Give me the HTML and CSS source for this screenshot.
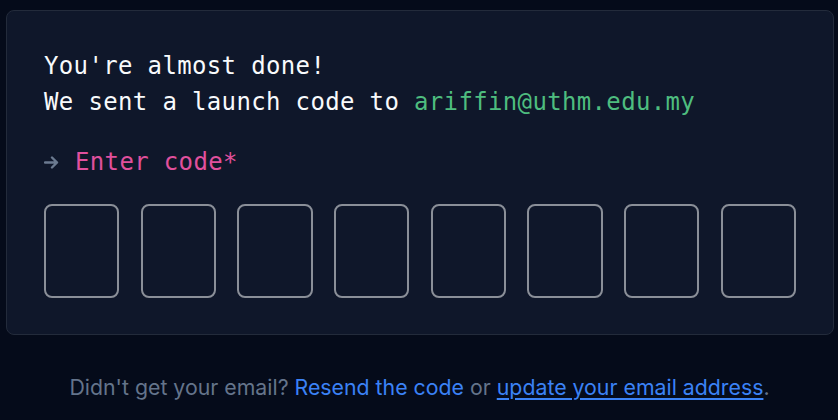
FILE: index.html
```html
<!DOCTYPE html>
<html lang="en">
<head>
<meta charset="utf-8">
<title>Verify</title>
<link rel="stylesheet" href="styles.css">
</head>
<body>
<main class="page">
  <section class="card">
    <p class="msg">You're almost done!<br>We sent a launch code to <span class="email">ariffin@uthm.edu.my</span></p>
    <label class="label"><svg class="arrow" width="15" height="13" viewBox="0 0 15 13" aria-hidden="true"><path d="M1 6.5H13M8 1.5L13 6.5L8 11.5" fill="none" stroke="#6b7a90" stroke-width="2.4" stroke-linecap="round" stroke-linejoin="round"/></svg><span class="prompt">Enter code*</span></label>
    <div class="codes">
      <div class="box"></div><div class="box"></div><div class="box"></div><div class="box"></div>
      <div class="box"></div><div class="box"></div><div class="box"></div><div class="box"></div>
    </div>
  </section>
  <p class="foot">Didn't get your email? <a class="link" href="#">Resend the code</a> or <a class="link underline" href="#">update your email address</a>.</p>
</main>
</body>
</html>
```
FILE: styles.css
```css
html, body { margin: 0; padding: 0; }
body {
  background: #050b1a;
  width: 838px;
  height: 420px;
  overflow: hidden;
}
.page {
  padding: 10px 5px 0 6px;
}
.card {
  box-sizing: border-box;
  width: 828px;
  height: 325px;
  background: #0f172a;
  border: 1px solid #232b3b;
  border-radius: 8px;
  padding: 37px 37px 0 37px;
}
.msg {
  margin: 0;
  font-family: "DejaVu Sans Mono", monospace;
  font-size: 24px;
  letter-spacing: 0.35px;
  line-height: 36px;
  color: #f8fafc;
}
.email { color: #4ebd7f; }
.label {
  display: flex;
  align-items: center;
  gap: 16px;
  margin-top: 27px;
  font-family: "DejaVu Sans Mono", monospace;
  font-size: 24px;
  letter-spacing: 0.35px;
  line-height: 30px;
}
.arrow { display: block; margin-top: 1px; }
.prompt { color: #e0509d; }
.codes {
  display: flex;
  gap: 21.5px;
  margin-top: 27px;
}
.box {
  box-sizing: border-box;
  width: 75.5px;
  height: 94px;
  border: 2px solid #8a8f98;
  border-radius: 8px;
}
.foot {
  margin: 40px 0 0;
  text-align: center;
  font-family: "Inter", "Liberation Sans", sans-serif;
  font-size: 21.3px;
  line-height: 24px;
  color: #64748b;
}
.link { color: #3b82f6; text-decoration: none; }
.underline { text-decoration: underline; text-underline-offset: 3px; }
```
